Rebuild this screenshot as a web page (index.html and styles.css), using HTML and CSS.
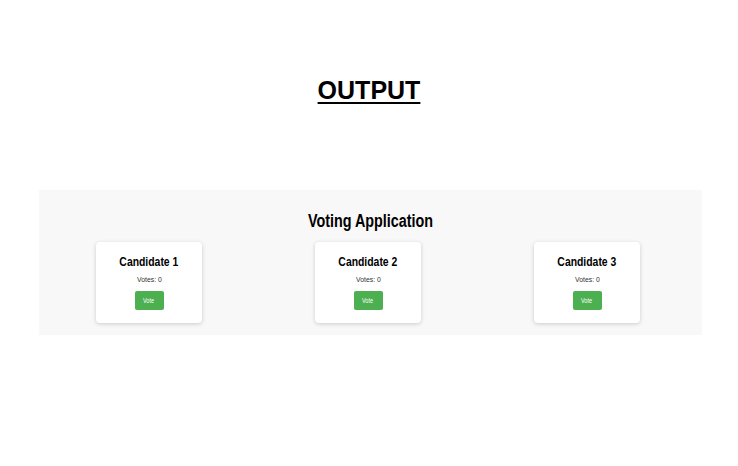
FILE: index.html
```html
<!DOCTYPE html>
<html>
<head>
<meta charset="utf-8">
<link rel="stylesheet" href="styles.css">
</head>
<body>
<h1 class="page-title">OUTPUT</h1>
<section class="app">
  <h2 class="app-title">Voting Application</h2>
  <div class="cards">
    <div class="card">
      <h3 class="card-title">Candidate 1</h3>
      <p class="votes">Votes: 0</p>
      <button class="vote-btn"><span class="btn-label">Vote</span></button>
    </div>
    <div class="card">
      <h3 class="card-title">Candidate 2</h3>
      <p class="votes">Votes: 0</p>
      <button class="vote-btn"><span class="btn-label">Vote</span></button>
    </div>
    <div class="card">
      <h3 class="card-title">Candidate 3</h3>
      <p class="votes">Votes: 0</p>
      <button class="vote-btn"><span class="btn-label">Vote</span></button>
    </div>
  </div>
</section>
</body>
</html>
```
FILE: styles.css
```css
html, body {
  margin: 0;
  padding: 0;
  background: #ffffff;
}
body {
  font-family: "Liberation Sans", Arial, sans-serif;
  color: #000;
}
.page-title {
  margin: 76px 0 0 0;
  font-size: 25px;
  line-height: 29px;
  font-weight: bold;
  text-align: center;
  text-decoration: underline;
  text-decoration-thickness: 2px;
  text-underline-offset: 3px;
}
.app {
  margin: 85px 36px 0 39px;
  background: #f8f8f8;
  padding: 21px 0 12px 0;
}
.app-title {
  margin: 0;
  font-size: 17.5px;
  line-height: 20px;
  font-weight: bold;
  text-align: center;
  transform: scaleX(0.82);
}
.cards {
  margin-top: 11px;
  display: flex;
  gap: 113px;
  padding-left: 57px;
}
.card {
  width: 106px;
  box-sizing: border-box;
  background: #fff;
  border-radius: 4px;
  box-shadow: 0 1px 4px rgba(0,0,0,0.18);
  padding: 12px 0 13px 0;
  display: flex;
  flex-direction: column;
  align-items: center;
}
.card-title {
  margin: 0;
  font-size: 13px;
  line-height: 15px;
  font-weight: bold;
  transform: scaleX(0.8);
}
.votes {
  margin: 6px 0 0 0;
  font-size: 8px;
  line-height: 10px;
  color: #333;
  transform: scaleX(0.86);
}
.vote-btn {
  margin-top: 6px;
  width: 29px;
  height: 19px;
  padding: 0;
  border: none;
  border-radius: 2px;
  background: #4caf50;
  color: #fff;
  font-family: inherit;
  font-size: 6.5px;
}
.btn-label {
  display: inline-block;
  transform: scaleX(0.85);
}
```
